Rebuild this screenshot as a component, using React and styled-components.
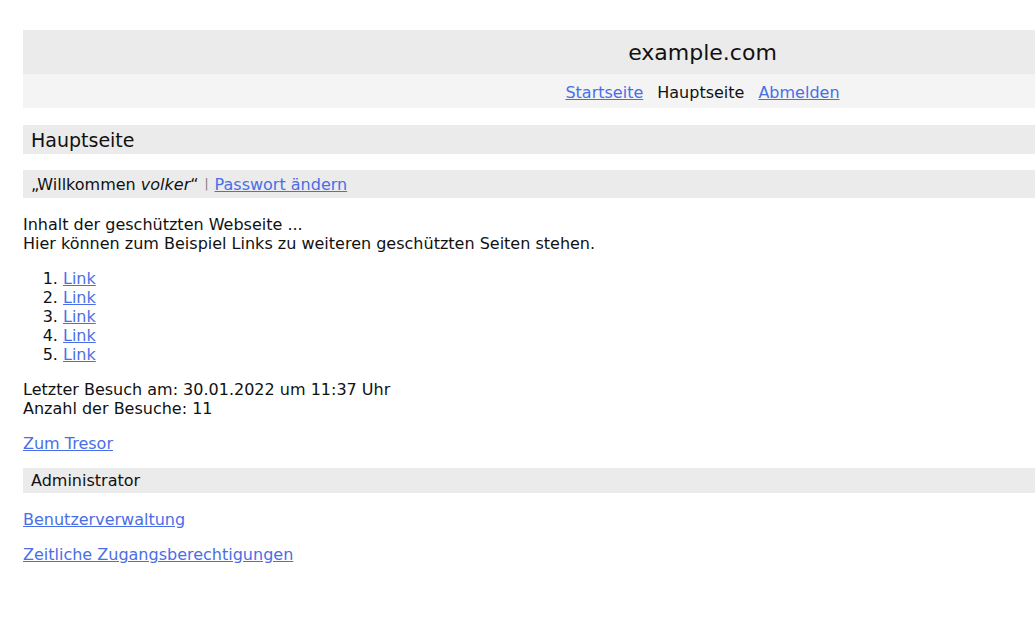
import React from 'react';
import styled, { createGlobalStyle } from 'styled-components';

const GlobalStyle = createGlobalStyle`
    html, body {
        overflow: hidden;
    }
    body {
        margin: 0;
        padding: 30px 0 0 23px;
        font-family: "DejaVu Sans", Verdana, sans-serif;
        font-size: 16px;
        color: #111;
        background: #fff;
    }
`;

const Page = styled.div`
    width: 1359px;
`;

const Header = styled.header`
    background: #ebebeb;
    height: 44px;
    display: flex;
    align-items: center;
    justify-content: center;
    font-size: 22px;
`;

const Nav = styled.nav`
    background: #f4f4f4;
    height: 34px;
    box-sizing: border-box;
    padding-top: 2px;
    display: flex;
    align-items: center;
    justify-content: center;
    gap: 14px;
`;

const Link = styled.a`
    color: #4a6ee6;
    text-decoration: underline;
    cursor: pointer;
`;

const Current = styled.span`
    color: #111;
`;

const Bar = styled.div`
    background: #ebebeb;
    display: flex;
    align-items: center;
    padding-left: 8px;
    height: ${(p) => p.$height}px;
    margin-top: ${(p) => p.$top}px;
    font-size: ${(p) => p.$size || 16}px;
`;

const Sep = styled.span`
    color: #777;
    font-size: 12px;
    margin: 0 6px;
`;

const Para = styled.p`
    margin: ${(p) => p.$top}px 0 0;
    line-height: 19px;
`;

const List = styled.ol`
    margin: 16px 0 0;
    padding-left: 40px;
    line-height: 19px;
`;

export default function App() {
    const links = [1, 2, 3, 4, 5];
    return (
        <>
            <GlobalStyle />
            <Page>
                <Header>example.com</Header>
                <Nav>
                    <Link>Startseite</Link>
                    <Current>Hauptseite</Current>
                    <Link>Abmelden</Link>
                </Nav>
                <Bar $height={29} $top={17} $size={19}>Hauptseite</Bar>
                <Bar $height={28} $top={16}>
                    „Willkommen&nbsp;<i>volker</i>“<Sep>|</Sep><Link>Passwort ändern</Link>
                </Bar>
                <Para $top={17}>
                    Inhalt der geschützten Webseite ...<br />
                    Hier können zum Beispiel Links zu weiteren geschützten Seiten stehen.
                </Para>
                <List>
                    {links.map((n) => (
                        <li key={n}><Link>Link</Link></li>
                    ))}
                </List>
                <Para $top={16}>
                    Letzter Besuch am: 30.01.2022 um 11:37 Uhr<br />
                    Anzahl der Besuche: 11
                </Para>
                <Para $top={16}><Link>Zum Tresor</Link></Para>
                <Bar $height={25} $top={15}>Administrator</Bar>
                <Para $top={17}><Link>Benutzerverwaltung</Link></Para>
                <Para $top={16}><Link>Zeitliche Zugangsberechtigungen</Link></Para>
            </Page>
        </>
    );
}
